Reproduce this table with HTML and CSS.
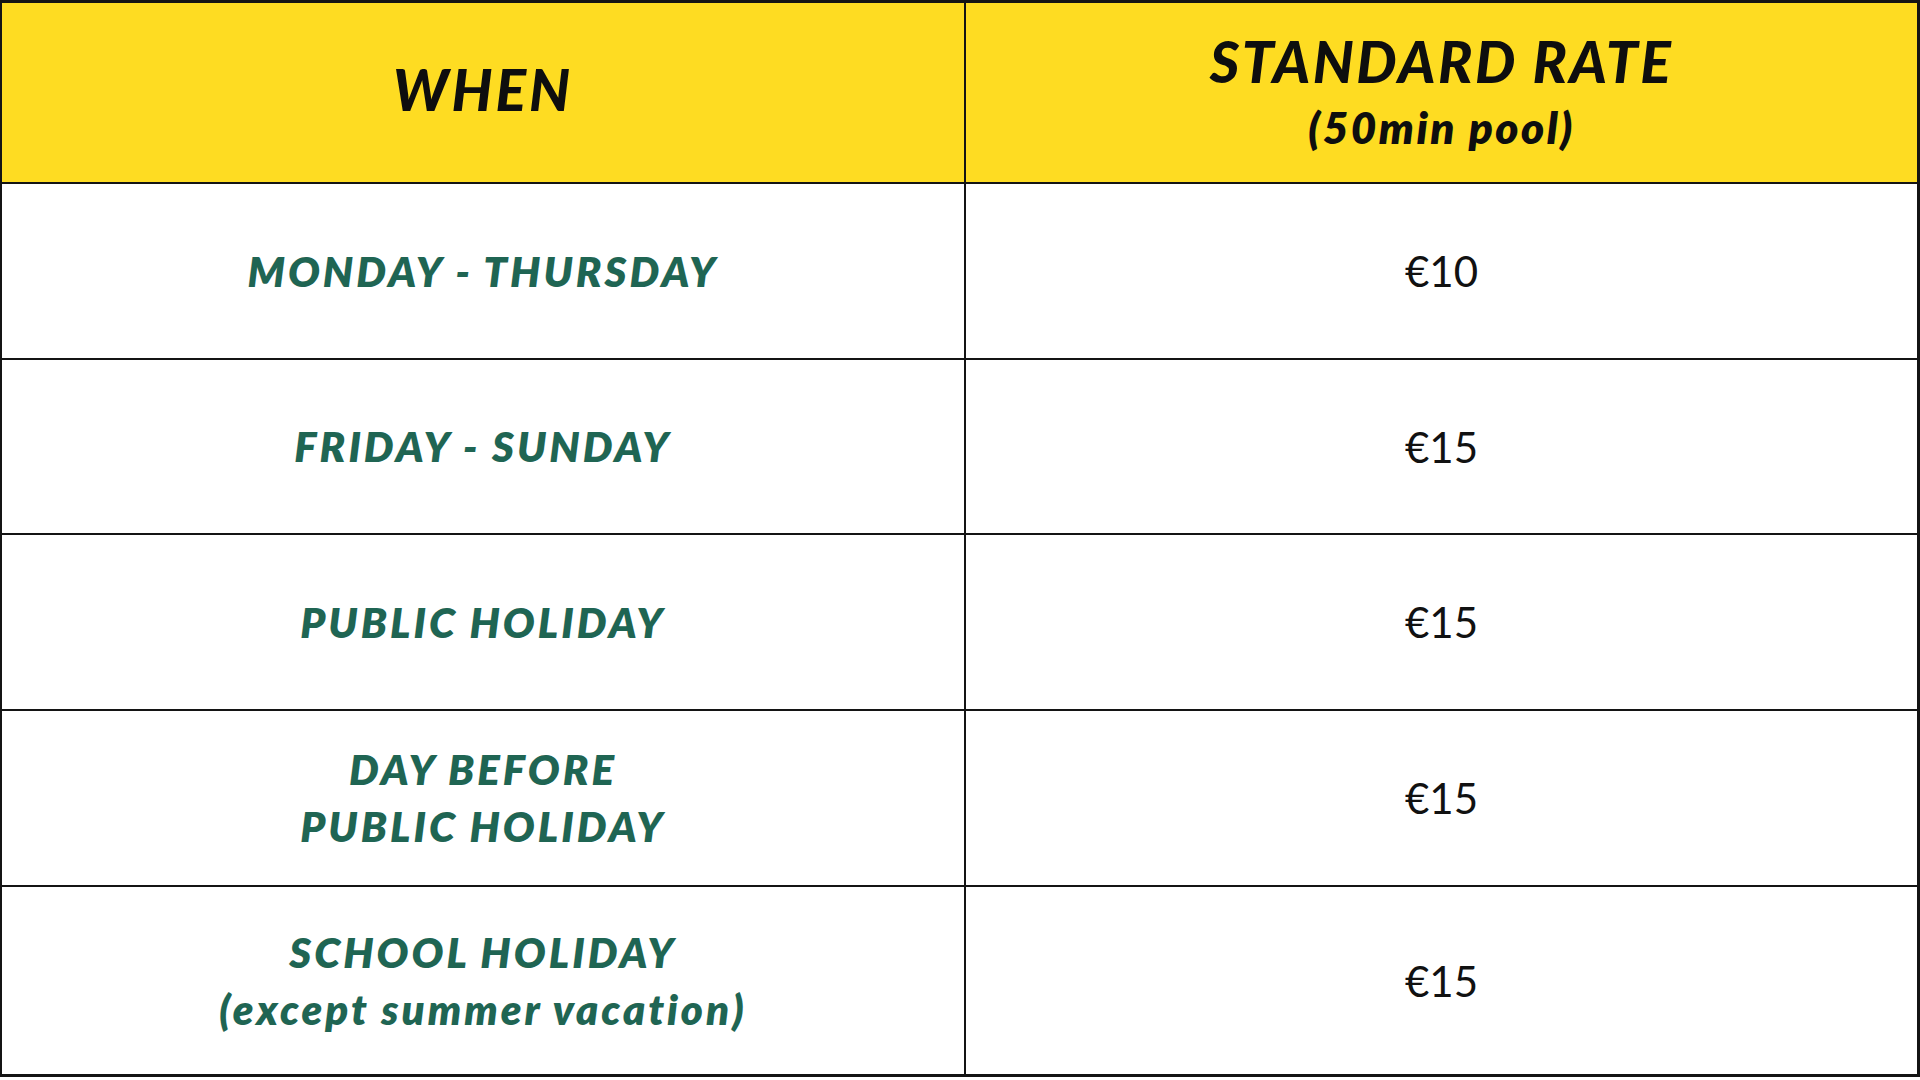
FILE: index.html
```html
<!DOCTYPE html>
<html lang="en">
<head>
<meta charset="utf-8">
<title>Pool rates</title>
<link rel="stylesheet" href="styles.css">
</head>
<body>
<div class="rates">
  <div class="cell head"><div class="h-main">WHEN</div></div>
  <div class="cell head"><div class="h-main h-two">STANDARD RATE</div><div class="h-sub">(50min pool)</div></div>

  <div class="cell when"><div class="w-line">MONDAY - THURSDAY</div></div>
  <div class="cell price">€10</div>

  <div class="cell when"><div class="w-line">FRIDAY - SUNDAY</div></div>
  <div class="cell price">€15</div>

  <div class="cell when"><div class="w-line">PUBLIC HOLIDAY</div></div>
  <div class="cell price">€15</div>

  <div class="cell when"><div class="w-line">DAY BEFORE</div><div class="w-line">PUBLIC HOLIDAY</div></div>
  <div class="cell price">€15</div>

  <div class="cell when"><div class="w-line">SCHOOL HOLIDAY</div><div class="w-line">(except summer vacation)</div></div>
  <div class="cell price">€15</div>
</div>
</body>
</html>
```

FILE: styles.css
```css
html, body {
  margin: 0;
  padding: 0;
  background: #ffffff;
}

.rates {
  width: 1920px;
  box-sizing: border-box;
  display: grid;
  grid-template-columns: 962px 951px;
  grid-template-rows: 179px 174px 173px 174px 174px 187px;
  column-gap: 2px;
  row-gap: 2px;
  padding: 3px 3px 3px 2px;
  background: #141414;
}

.cell {
  background: #ffffff;
  display: flex;
  flex-direction: column;
  align-items: center;
  justify-content: center;
  text-align: center;
}

.head {
  background: #fedc22;
  color: #0e0e0e;
  font-family: "Lato", "DejaVu Sans", sans-serif;
  font-weight: 900;
  font-style: italic;
}

.h-main {
  font-size: 57px;
  line-height: 66px;
  margin-top: -8px;
  letter-spacing: 3px;
}

.h-two {
  margin-top: 2px;
  letter-spacing: 2.5px;
}

.h-sub {
  font-size: 44px;
  line-height: 66px;
  font-weight: 800;
  letter-spacing: 2.5px;
}

.when {
  color: #1f6553;
  font-family: "Lato", "DejaVu Sans", sans-serif;
  font-weight: 800;
  font-style: italic;
  font-size: 42px;
  line-height: 57px;
  letter-spacing: 3px;
}

.price {
  color: #111111;
  font-family: "Lato", "DejaVu Sans", sans-serif;
  font-weight: 400;
  font-size: 42px;
}
```
